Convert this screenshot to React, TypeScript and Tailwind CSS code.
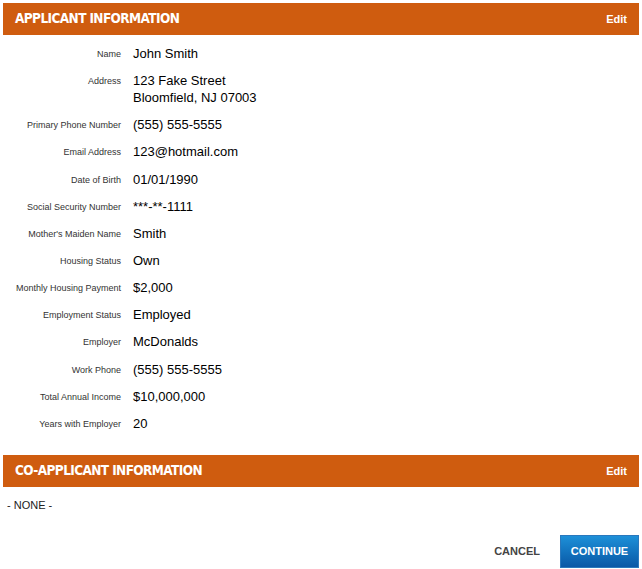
import React from "react";

const rows: [string, string[]][] = [
  ["Name", ["John Smith"]],
  ["Address", ["123 Fake Street", "Bloomfield, NJ 07003"]],
  ["Primary Phone Number", ["(555) 555-5555"]],
  ["Email Address", ["123@hotmail.com"]],
  ["Date of Birth", ["01/01/1990"]],
  ["Social Security Number", ["***-**-1111"]],
  ["Mother's Maiden Name", ["Smith"]],
  ["Housing Status", ["Own"]],
  ["Monthly Housing Payment", ["$2,000"]],
  ["Employment Status", ["Employed"]],
  ["Employer", ["McDonalds"]],
  ["Work Phone", ["(555) 555-5555"]],
  ["Total Annual Income", ["$10,000,000"]],
  ["Years with Employer", ["20"]],
];

function Header({ title }: { title: string }) {
  return (
    <div className="flex h-[32px] items-center justify-between bg-[#cf5c0f] pl-[12px] pr-[12px] text-white">
      <span
        className="text-[13.5px] font-bold leading-none tracking-[-0.6px]"
        style={{ fontFamily: '"DejaVu Sans Condensed", "DejaVu Sans", sans-serif', fontStretch: "condensed" }}
      >
        {title}
      </span>
      <span className="text-[11px] font-bold">Edit</span>
    </div>
  );
}

export default function App() {
  return (
    <div
      className="h-[569px] w-[642px] bg-white px-[3px] pt-[3px] text-black"
      style={{ fontFamily: '"Liberation Sans", Arial, sans-serif' }}
    >
      <Header title="APPLICANT INFORMATION" />
      <div className="pt-[10px] pb-[13px]">
        {rows.map(([label, vals]) => (
          <div key={label} className="flex items-start pb-[10.15px]">
            <div className="w-[118px] shrink-0 pt-[1px] text-right text-[9px] leading-[16px] text-[#333]">{label}</div>
            <div className="pl-[12px] text-[13px] leading-[17px]">
              {vals.map((v) => (
                <div key={v}>{v}</div>
              ))}
            </div>
          </div>
        ))}
      </div>
      <Header title="CO-APPLICANT INFORMATION" />
      <div className="pl-[4px] pt-[11px] text-[11px] leading-[14px] text-[#222]">- NONE -</div>
      <div className="mt-[23px] flex items-center justify-end gap-[20px]">
        <span className="text-[11px] font-bold text-[#444]">CANCEL</span>
        <button className="flex h-[33px] w-[79px] items-center justify-center border border-[#2a78bd] bg-gradient-to-b from-[#1e90d8] to-[#0a58a6] text-[11px] font-bold text-white">
          CONTINUE
        </button>
      </div>
    </div>
  );
}
